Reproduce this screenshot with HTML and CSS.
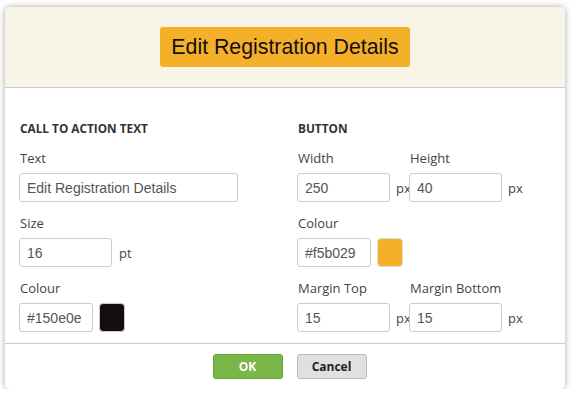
FILE: index.html
```html
<!DOCTYPE html>
<html lang="en">
<head>
    <meta charset="UTF-8">
    <meta name="viewport" content="width=device-width, initial-scale=1.0">
    <title>Edit Call To Action</title>
    <link rel="stylesheet" href="styles.css">
</head>
<body>

    <div class="dialog">
        <div class="dialog-header">
            <div class="preview-button">Edit Registration Details</div>
        </div>

        <div class="dialog-body">
            <div class="column">
                <h3>Call to action text</h3>

                <div class="field">
                    <label>Text</label>
                    <input class="input input-wide" type="text" value="Edit Registration Details">
                </div>

                <div class="field">
                    <label>Size</label>
                    <div class="row">
                        <input class="input input-num" type="text" value="16">
                        <span class="unit">pt</span>
                    </div>
                </div>

                <div class="field">
                    <label>Colour</label>
                    <div class="row">
                        <input class="input input-colour" type="text" value="#150e0e">
                        <span class="swatch swatch-dark"></span>
                    </div>
                </div>
            </div>

            <div class="column">
                <h3>Button</h3>

                <div class="pair">
                    <div class="field">
                        <label>Width</label>
                        <div class="row">
                            <input class="input input-num" type="text" value="250">
                            <span class="unit">px</span>
                        </div>
                    </div>
                    <div class="field">
                        <label>Height</label>
                        <div class="row">
                            <input class="input input-num" type="text" value="40">
                            <span class="unit">px</span>
                        </div>
                    </div>
                </div>

                <div class="field">
                    <label>Colour</label>
                    <div class="row">
                        <input class="input input-colour" type="text" value="#f5b029">
                        <span class="swatch swatch-orange"></span>
                    </div>
                </div>

                <div class="pair">
                    <div class="field">
                        <label>Margin Top</label>
                        <div class="row">
                            <input class="input input-num" type="text" value="15">
                            <span class="unit">px</span>
                        </div>
                    </div>
                    <div class="field">
                        <label>Margin Bottom</label>
                        <div class="row">
                            <input class="input input-num" type="text" value="15">
                            <span class="unit">px</span>
                        </div>
                    </div>
                </div>
            </div>
        </div>

        <div class="dialog-footer">
            <button class="btn btn-ok">OK</button>
            <button class="btn btn-cancel">Cancel</button>
        </div>
    </div>

</body>
</html>
```

FILE: styles.css
```css
body {
    margin: 0;
    background: #fff;
    font-family: "Open Sans", sans-serif;
    color: #444;
}
.dialog {
    width: 560px;
    height: 382px;
    margin: 7px 0 0 5px;
    background: #fff;
    border-radius: 5px;
    box-shadow: 0 0 6px rgba(0, 0, 0, 0.35);
    overflow: hidden;
    display: flex;
    flex-direction: column;
}
.dialog-header {
    background: #f8f4e8;
    border-bottom: 1px solid #ccc;
    padding: 20px 0;
    display: flex;
    justify-content: center;
}
.preview-button {
    width: 250px;
    height: 40px;
    background: #f5b029;
    border-radius: 3px;
    color: #150e0e;
    font-family: "Liberation Sans", Arial, sans-serif;
    font-size: 21.3px;
    display: flex;
    align-items: center;
    justify-content: center;
}
.dialog-body {
    display: flex;
    padding: 31px 0 11px 14px;
    border-bottom: 1px solid #ccc;
}
.column {
    flex: none;
    width: 278px;
}
.column + .column {
    width: 260px;
}
h3 {
    margin: 0 0 12px 1px;
    font-size: 11.8px;
    line-height: 18px;
    font-weight: bold;
    text-transform: uppercase;
    color: #333;
}
.field {
    margin-bottom: 12px;
}
.column > .field:last-child,
.column > .pair:last-child .field {
    margin-bottom: 0;
}
label {
    display: block;
    margin: 0 0 6px 1px;
    font-size: 13px;
    line-height: 18px;
}
.pair {
    display: flex;
}
.pair .field {
    width: 112px;
}
.row {
    display: flex;
    align-items: center;
}
.input {
    box-sizing: border-box;
    height: 29px;
    padding: 0 7px;
    border: 1px solid #ccc;
    border-radius: 3px;
    font-family: "Liberation Sans", Arial, sans-serif;
    font-size: 14px;
    color: #555;
    background: #fff;
}
.input-wide {
    width: 219px;
}
.input-num {
    width: 93px;
}
.input-colour {
    width: 74px;
}
.unit {
    margin-left: 7px;
    font-size: 13px;
    color: #444;
}
.pair .unit {
    margin-left: 6px;
    width: 13px;
    overflow: visible;
    white-space: nowrap;
}
.swatch {
    width: 26px;
    height: 29px;
    margin-left: 6px;
    border-radius: 4px;
    box-sizing: border-box;
    border: 1px solid #ddd;
}
.swatch-dark {
    background: #150e0e;
    border-color: #ccc;
}
.swatch-orange {
    background: #f5b029;
}
.dialog-footer {
    padding: 10px 0 0 9px;
    display: flex;
    justify-content: center;
    gap: 14px;
}
.btn {
    width: 70px;
    height: 25px;
    border-radius: 3px;
    font-family: "Open Sans", sans-serif;
    font-size: 12px;
    font-weight: bold;
    cursor: pointer;
}
.btn-ok {
    background: #7ab648;
    border: 1px solid #6aa53a;
    color: #fff;
}
.btn-cancel {
    background: #e0e0e0;
    border: 1px solid #bbb;
    color: #222;
}
```
